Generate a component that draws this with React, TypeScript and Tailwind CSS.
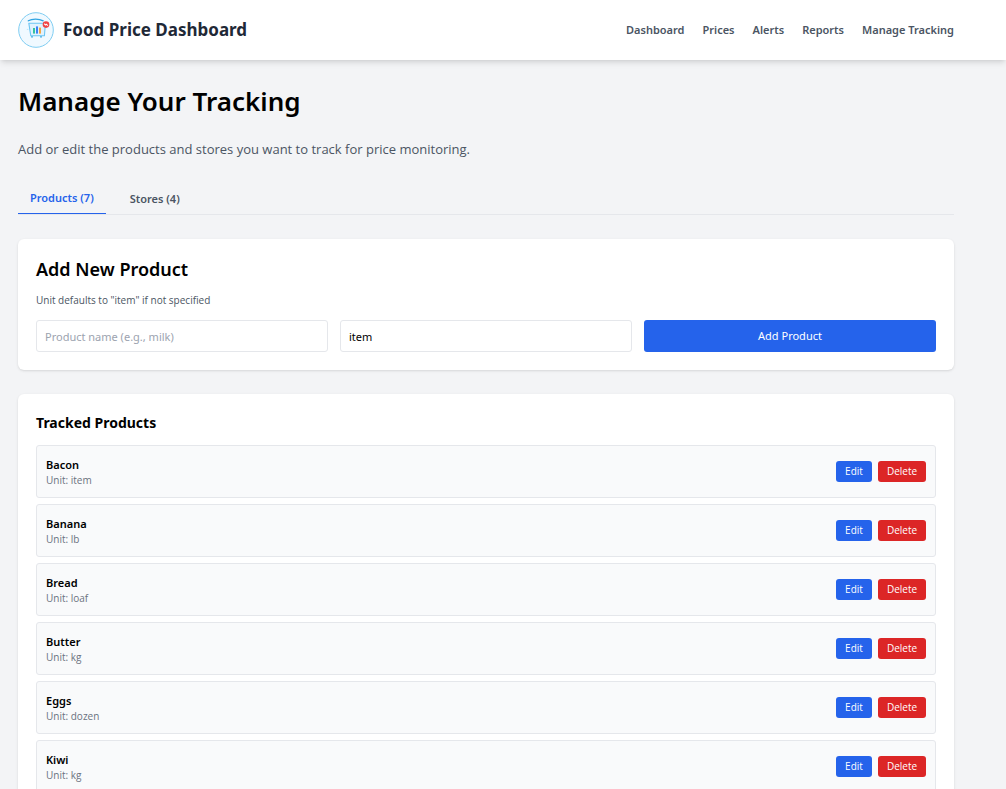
import clsx from "clsx";
import { useState } from "react";

type Product = { name: string; unit: string };

const NAV_LINKS = ["Dashboard", "Prices", "Alerts", "Reports", "Manage Tracking"];

const PRODUCTS: Array<Product> = [
	{ name: "Bacon", unit: "item" },
	{ name: "Banana", unit: "lb" },
	{ name: "Bread", unit: "loaf" },
	{ name: "Butter", unit: "kg" },
	{ name: "Eggs", unit: "dozen" },
	{ name: "Kiwi", unit: "kg" },
	{ name: "Milk", unit: "gallon" },
];

const Logo = () => (
	<svg aria-hidden="true" className="size-9" fill="none" viewBox="0 0 36 36">
		<circle cx="18" cy="18" fill="#f0f9ff" r="17.3" stroke="#7fcdf2" />
		<path
			d="M10.3 8.8C14 6.6 21 6.6 25.2 8.8"
			stroke="#2fa4e2"
			strokeLinecap="round"
			strokeWidth="1.3"
		/>
		<path
			d="M10.8 11.2h16.6l-1 12.6H12.8l-2-12.6Z"
			fill="#e0f2fe"
			stroke="#6cc5f3"
			strokeLinejoin="round"
			strokeWidth="1.1"
		/>
		<path d="M8.8 17.4h1.6" stroke="#bae6fd" />
		<rect fill="#34c3a0" height="5.6" width="2" x="15" y="16" />
		<rect fill="#3b82f6" height="7.2" width="2" x="18" y="14.4" />
		<rect fill="#f5a742" height="6" width="2" x="21" y="15.6" />
		<circle cx="14" cy="24.8" fill="#38a9e4" r="0.9" />
		<circle cx="23" cy="24.8" fill="#38a9e4" r="0.9" />
		<circle cx="28" cy="12.6" fill="#ef4444" r="3.3" />
		<path d="m26.2 11.8 1.5 1.2.7-.8 1.4 1.5" stroke="#fff" strokeWidth="1.1" />
	</svg>
);

const ProductRow = ({ name, unit }: Product) => (
	<li className="flex items-center justify-between rounded-[3px] border border-[#e5e7eb] bg-[#f9fafb] px-[9px] py-[9px]">
		<div className="flex flex-col pt-[2px]">
			<span className="font-['Noto_Sans',sans-serif] text-[11px] leading-[16px] font-semibold">
				{name}
			</span>
			<span className="text-[10px] leading-[15px] text-[#6b7280]">
				Unit: {unit}
			</span>
		</div>
		<div className="flex gap-1.5">
			<button
				className="h-[21px] w-9 rounded-[3px] bg-[#2563eb] text-[10px] leading-[15px] text-white"
				type="button"
			>
				Edit
			</button>
			<button
				className="h-[21px] w-12 rounded-[3px] bg-[#dc2626] text-[10px] leading-[15px] text-white"
				type="button"
			>
				Delete
			</button>
		</div>
	</li>
);

const App = () => {
	const [tab, setTab] = useState("products");
	const [name, setName] = useState("");
	const [unit, setUnit] = useState("item");

	const tabs = [
		{ id: "products", label: "Products (7)" },
		{ id: "stores", label: "Stores (4)" },
	];

	return (
		<div className="min-h-screen bg-[#f3f4f6] font-['Open_Sans','Noto_Sans',sans-serif] text-black">
			<header className="flex h-[60px] items-center justify-between bg-white pr-[52px] pl-[18px] font-['Noto_Sans',sans-serif] shadow-md">
				<a className="flex items-center gap-[9px]" href="#home">
					<Logo />
					<span className="text-[17px] leading-[26px] font-bold text-[#1f2937]">
						Food Price Dashboard
					</span>
				</a>
				<nav className="flex gap-[18px] text-[11px] leading-[18px] font-semibold text-[#4b5563]">
					{NAV_LINKS.map((link) => (
						<a href="#nav" key={link}>
							{link}
						</a>
					))}
				</nav>
			</header>

			<main className="flex flex-col pt-6 pr-[52px] pb-6 pl-[18px]">
				<h1 className="font-['Noto_Sans',sans-serif] text-[26px] leading-[34px] font-semibold">
					Manage Your Tracking
				</h1>
				<p className="mt-[21px] text-[13px] leading-5 text-[#4b5563]">
					Add or edit the products and stores you want to track for price
					monitoring.
				</p>

				<div className="mt-6 flex gap-3 border-b border-[#e5e7eb]" role="tablist">
					{tabs.map(({ id, label }) => (
						<button
							aria-selected={tab === id}
							className={clsx(
								"h-[31px] px-3 font-['Noto_Sans',sans-serif] text-[11px] leading-[18px] font-semibold",
								tab === id
									? "border-b border-[#2563eb] text-[#2563eb]"
									: "text-[#4b5563]"
							)}
							key={id}
							onClick={() => setTab(id)}
							role="tab"
							type="button"
						>
							{label}
						</button>
					))}
				</div>

				<section className="mt-6 rounded-md bg-white p-[18px] shadow-sm">
					<h2 className="font-['Noto_Sans',sans-serif] text-[18px] leading-6 font-semibold">
						Add New Product
					</h2>
					<p className="mt-[11px] text-[10px] leading-4 text-[#4b5563]">
						Unit defaults to "item" if not specified
					</p>
					<form
						className="mt-3 grid grid-cols-3 gap-3 font-['Noto_Sans',sans-serif] text-[11px] leading-[18px]"
						onSubmit={(event) => event.preventDefault()}
					>
						<input
							aria-label="Product name"
							className="h-8 min-w-0 rounded-[3px] border border-[#e5e7eb] px-2 placeholder:text-[#9ca3af]"
							onChange={(event) => setName(event.target.value)}
							placeholder="Product name (e.g., milk)"
							type="text"
							value={name}
						/>
						<input
							aria-label="Unit"
							className="h-8 min-w-0 rounded-[3px] border border-[#e5e7eb] px-2"
							onChange={(event) => setUnit(event.target.value)}
							type="text"
							value={unit}
						/>
						<button
							className="h-8 rounded-[3px] bg-[#2563eb] text-white"
							type="submit"
						>
							Add Product
						</button>
					</form>
				</section>

				<section className="mt-6 rounded-md bg-white p-[18px] shadow-sm">
					<h3 className="font-['Noto_Sans',sans-serif] text-[14px] leading-[21px] font-bold">
						Tracked Products
					</h3>
					<ul className="mt-3 flex flex-col gap-1.5">
						{PRODUCTS.map((product) => (
							<ProductRow key={product.name} {...product} />
						))}
					</ul>
				</section>
			</main>
		</div>
	);
};

export default App;
